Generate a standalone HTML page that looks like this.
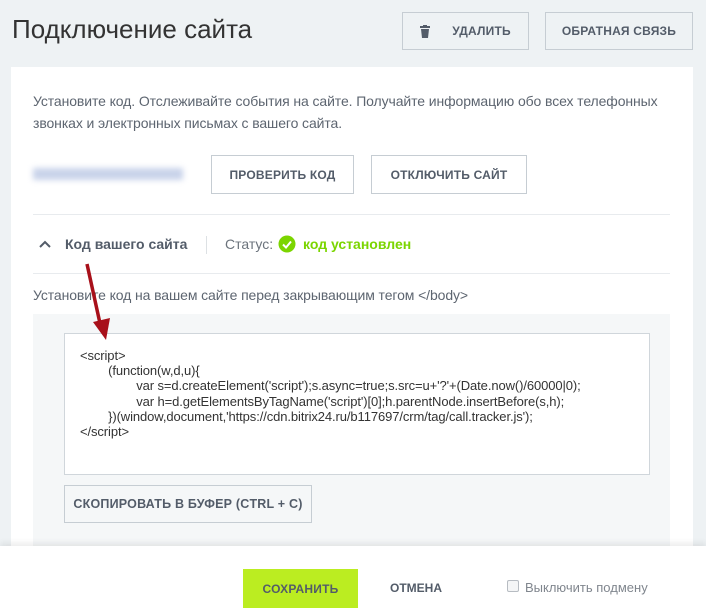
<!DOCTYPE html>
<html><head><meta charset="utf-8"><style>
*{margin:0;padding:0;box-sizing:border-box}
body{width:706px;height:612px;background:#eef2f4;font-family:"Liberation Sans",sans-serif;color:#535c69;position:relative;overflow:hidden}
.a{position:absolute}
.btn{position:absolute;border:1px solid #c6cdd3;background:#fff;font-weight:bold;font-size:12px;color:#535c69;display:flex;align-items:center;justify-content:center;letter-spacing:0.2px}
.gb{background:#eef2f4}
</style></head><body>
<div class="a" style="left:12px;top:14px;font-size:26px;color:#333;font-weight:300">Подключение сайта</div>
<div class="btn gb" style="left:402px;top:12px;width:127px;height:38px;border-color:#c6cdd3"><svg width="10" height="13" viewBox="0 0 10 13" style="margin-right:22px"><rect x="0" y="1" width="10" height="2" fill="#535c69"/><rect x="3" y="0" width="4" height="2" fill="#535c69"/><path d="M1 4h8l-1 9H2z" fill="#535c69"/></svg>УДАЛИТЬ</div>
<div class="btn gb" style="left:545px;top:12px;width:148px;height:38px">ОБРАТНАЯ СВЯЗЬ</div>
<div class="a" style="left:11px;top:67px;width:682px;height:480px;background:#fff"></div>
<div class="a" style="left:33px;top:90px;font-size:14px;line-height:22px;width:650px;color:#5d6570;letter-spacing:-0.1px">Установите код. Отслеживайте события на сайте. Получайте информацию обо всех телефонных звонках и электронных письмах с вашего сайта.</div>
<div class="a" style="left:33px;top:168px;width:150px;height:12px;background:#c9d3ea;filter:blur(3px)"></div>
<div class="btn" style="left:211px;top:155px;width:143px;height:39px">ПРОВЕРИТЬ КОД</div>
<div class="btn" style="left:371px;top:155px;width:156px;height:39px">ОТКЛЮЧИТЬ САЙТ</div>
<div class="a" style="left:33px;top:214px;width:637px;height:1px;background:#e8ebee"></div>
<svg class="a" style="left:38px;top:239px" width="14" height="10"><path d="M2 8L7 3l5 5" stroke="#535c69" stroke-width="2" fill="none"/></svg>
<div class="a" style="left:65px;top:236px;font-size:14px;font-weight:bold;color:#535c69">Код вашего сайта</div>
<div class="a" style="left:206px;top:236px;width:1px;height:18px;background:#dde1e4"></div>
<div class="a" style="left:225px;top:236px;font-size:14px;color:#6b737c">Статус:</div>
<svg class="a" style="left:278px;top:235px" width="18" height="18"><circle cx="9" cy="9" r="8.5" fill="#7bd500"/><path d="M5 9.5l3 3 5-6" stroke="#fff" stroke-width="2" fill="none"/></svg>
<div class="a" style="left:303px;top:236px;font-size:14px;font-weight:bold;color:#7bd500">код установлен</div>
<div class="a" style="left:33px;top:273px;width:637px;height:1px;background:#e8ebee"></div>
<div class="a" style="left:33px;top:287px;font-size:14px;color:#5d6570;letter-spacing:-0.1px">Установите код на вашем сайте перед закрывающим тегом &lt;/body&gt;</div>
<div class="a" style="left:33px;top:314px;width:637px;height:233px;background:#f5f7f8"></div>
<div class="a" style="left:64px;top:333px;width:586px;height:142px;background:#fff;border:1px solid #d0d6db"></div>
<div class="a" style="left:80px;top:348px;font-size:13px;line-height:15.2px;color:#333;white-space:pre;letter-spacing:-0.1px">&lt;script&gt;
        (function(w,d,u){
                var s=d.createElement('script');s.async=true;s.src=u+'?'+(Date.now()/60000|0);
                var h=d.getElementsByTagName('script')[0];h.parentNode.insertBefore(s,h);
        })(window,document,'https://cdn.bitrix24.ru/b117697/crm/tag/call.tracker.js');
&lt;/script&gt;</div>
<div class="btn" style="left:64px;top:485px;width:248px;height:38px;background:#f5f7f8;border-color:#c6cdd3;font-size:12.5px">СКОПИРОВАТЬ В БУФЕР (CTRL + C)</div>
<div class="a" style="left:0;top:546px;width:706px;height:66px;background:#fff;box-shadow:0 -3px 6px rgba(0,0,0,0.08)"></div>
<div class="btn" style="left:243px;top:569px;width:115px;height:39px;background:#bbed21;border:none;color:#535c69">СОХРАНИТЬ</div>
<div class="a" style="left:390px;top:581px;font-size:12px;font-weight:bold;color:#535c69">ОТМЕНА</div>
<div class="a" style="left:507px;top:580px;width:12px;height:12px;border:1px solid #b7bcc2;border-radius:2px;background:#f4f5f6"></div>
<div class="a" style="left:525px;top:580px;font-size:13px;color:#80868e">Выключить подмену</div>
<svg class="a" style="left:0;top:0" width="706" height="612"><path d="M87 264L101 328" stroke="#a8101a" stroke-width="3.5"/><path d="M93 322L106 340L110 318z" fill="#a8101a"/></svg>
</body></html>
